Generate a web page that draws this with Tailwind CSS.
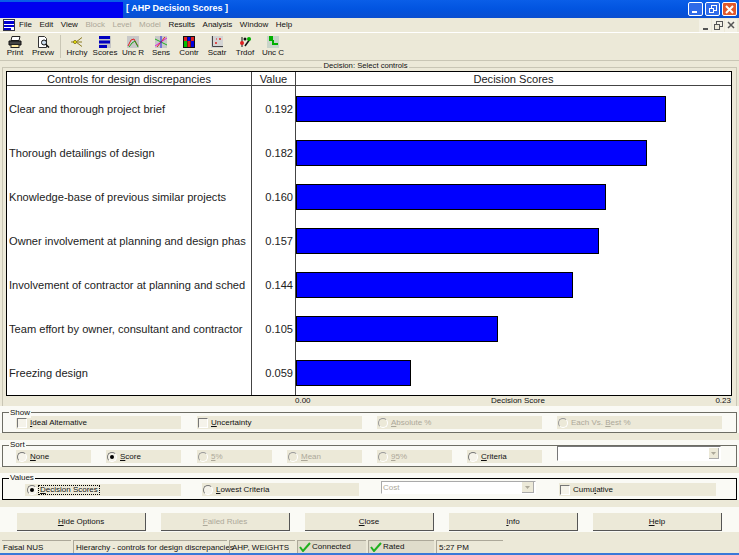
<!DOCTYPE html>
<html lang="en">
<head>
  <meta charset="UTF-8" />
  <title>AHP Decision Scores</title>
  <script src="https://cdn.jsdelivr.net/npm/@tailwindcss/browser@4"></script>
</head>
<body class="w-[739px] h-[555px] overflow-hidden bg-[#ece9d8] font-['Liberation_Sans',sans-serif] text-[8px] text-[#111]">

  <!-- Title bar -->
  <div class="h-[18px] flex items-center bg-gradient-to-b from-[#0a5ee8] via-[#0254e0] to-[#0a4ed0]">
    <div class="w-[123px] h-[16px] self-end bg-[#0000f0]"></div>
    <div class="ml-[3px] text-[9px] font-bold text-white">[ AHP Decision Scores ]</div>
    <div class="ml-auto flex gap-[2px] pr-[2px]">
      <div class="w-[15px] h-[14px] rounded-[2px] border border-white bg-[#2f6ae8] flex items-end pl-[3px] pb-[2px]"><div class="w-[5px] h-[2px] bg-white"></div></div>
      <div class="w-[15px] h-[14px] rounded-[2px] border border-white bg-[#2f6ae8] flex items-center justify-center">
        <svg width="10" height="10" viewBox="0 0 10 10" fill="none" stroke="#fff"><rect x="3.5" y="1.5" width="5" height="5"/><rect x="1.5" y="4.5" width="4" height="4" fill="#2f6ae8"/></svg>
      </div>
      <div class="w-[15px] h-[14px] rounded-[2px] border border-white bg-[#e2582c] flex items-center justify-center">
        <svg width="9" height="9" viewBox="0 0 9 9" stroke="#fff" stroke-width="2"><path d="M1 1 8 8M8 1 1 8"/></svg>
      </div>
    </div>
  </div>

  <!-- Menu -->
  <div class="h-[15px] flex items-center pr-[2px] border-b border-white">
    <svg class="ml-[3px] mr-[4px]" width="12" height="12" viewBox="0 0 12 12"><rect width="12" height="12" fill="#fff"/><rect x="0.5" y="0.5" width="11" height="11" fill="none" stroke="#334"/><rect x="1" y="2" width="10" height="3" fill="#0000d0"/><rect x="1" y="6" width="10" height="2" fill="#0000d0"/><rect x="1" y="9" width="7" height="2" fill="#0000d0"/></svg>
    <div class="flex gap-[7.5px]">
      <span>File</span><span>Edit</span><span>View</span>
      <span class="text-[#aca899]">Block</span><span class="text-[#aca899]">Level</span><span class="text-[#aca899]">Model</span>
      <span>Results</span><span>Analysis</span><span>Window</span><span>Help</span>
    </div>
    <div class="ml-auto flex gap-[1px]">
      <div class="w-[12px] h-[13px] bg-[#f3f1e6] flex items-end justify-center pb-[2px]"><div class="w-[5px] h-[2px] bg-[#555]"></div></div>
      <div class="w-[12px] h-[13px] bg-[#f3f1e6] flex items-center justify-center"><svg width="9" height="9" viewBox="0 0 9 9" fill="none" stroke="#555"><rect x="2.5" y="0.5" width="6" height="5"/><rect x="0.5" y="3.5" width="5" height="5" fill="#ece9d8"/></svg></div>
      <div class="w-[12px] h-[13px] bg-[#f3f1e6] flex items-center justify-center"><svg width="8" height="8" viewBox="0 0 8 8" stroke="#555" stroke-width="1.5"><path d="M1 1 7 7M7 1 1 7"/></svg></div>
    </div>
  </div>

  <!-- Toolbar -->
  <div class="h-[28px] flex items-start pt-[3px] pl-[1px] leading-[10px] border-b border-[#c9c6b5]">
    <div class="w-[28px] flex flex-col items-center">
      <svg width="14" height="12" viewBox="0 0 14 12"><path d="M4 .5h8l-1 4H3z" fill="#fff" stroke="#222"/><path d="M1 5h12v4H1z" fill="#444" stroke="#111"/><rect x="3" y="8.5" width="8" height="3" fill="#ffe9a0" stroke="#222"/></svg>
      <span>Print</span>
    </div>
    <div class="w-[28px] flex flex-col items-center">
      <svg width="14" height="12" viewBox="0 0 14 12"><path d="M2.500 .5h6l2 2v9h-8z" fill="#fff" stroke="#333"/><circle cx="8" cy="6.500" r="2.500" fill="#cde" stroke="#111"/><path d="M10 8.500l3 3" stroke="#111" stroke-width="1.500"/></svg>
      <span>Prevw</span>
    </div>
    <div class="w-px h-[23px] bg-[#c9c6b5] ml-[3px] mr-[2px] -mt-[1px]"></div>
    <div class="w-[28px] flex flex-col items-center">
      <svg width="14" height="12" viewBox="0 0 14 12" fill="none" stroke="#8a7a20"><path d="M1 6h5M6 6 12 1.500M6 6h6M6 6l6 4.500"/><circle cx="5" cy="6" r="1.500" fill="#ff0"/></svg>
      <span>Hrchy</span>
    </div>
    <div class="w-[28px] flex flex-col items-center">
      <svg width="12" height="12" viewBox="0 0 12 12"><rect width="12" height="12" fill="#c4c4c4"/><rect x="0" y="0" width="11" height="3" fill="#0000c0"/><rect x="0" y="4.500" width="11" height="3" fill="#0000c0"/><rect x="0" y="9" width="8" height="3" fill="#0000c0"/></svg>
      <span>Scores</span>
    </div>
    <div class="w-[28px] flex flex-col items-center">
      <svg width="12" height="12" viewBox="0 0 12 12" fill="none"><rect width="12" height="12" fill="#c8c8c8"/><path d="M1 10 4 4 7 3 9 7 11 10" stroke="#e02020"/><path d="M2 11 5 7 8 5 11 11" stroke="#20a020"/></svg>
      <span>Unc R</span>
    </div>
    <div class="w-[28px] flex flex-col items-center">
      <svg width="12" height="12" viewBox="0 0 12 12" fill="none"><rect width="12" height="12" fill="#c8c8c8"/><path d="M0 10 12 2" stroke="#e020e0"/><path d="M0 3 12 9" stroke="#20b020"/><path d="M2 11 10 1" stroke="#e02020"/><path d="M6 0v12" stroke="#2020e0"/></svg>
      <span>Sens</span>
    </div>
    <div class="w-[28px] flex flex-col items-center">
      <svg width="12" height="12" viewBox="0 0 12 12"><rect width="12" height="12" fill="#111"/><rect x="1" y="1" width="3" height="4" fill="#e02020"/><rect x="1" y="5" width="3" height="6" fill="#00c000"/><rect x="4.500" y="1" width="3" height="4" fill="#0000e0"/><rect x="4.500" y="5" width="3" height="6" fill="#e02020"/><rect x="8" y="1" width="3" height="4" fill="#e02020"/><rect x="8" y="5" width="3" height="6" fill="#0000e0"/></svg>
      <span>Contr</span>
    </div>
    <div class="w-[28px] flex flex-col items-center">
      <svg width="12" height="12" viewBox="0 0 12 12" fill="none"><rect width="12" height="12" fill="#d4d4d4"/><path d="M1.500 0v10.500H12" stroke="#444"/><path d="M4 7h2M5 6v2M8 3h2M9 2v2M5 3h1" stroke="#e02020"/></svg>
      <span>Scatr</span>
    </div>
    <div class="w-[28px] flex flex-col items-center">
      <svg width="12" height="12" viewBox="0 0 12 12" fill="none"><path d="M3 1v10" stroke="#111"/><circle cx="3" cy="7" r="2" fill="#e02020"/><path d="M6 10 11 3" stroke="#111" stroke-width="1.500"/><circle cx="10" cy="3" r="2" fill="#00b000"/><circle cx="6" cy="3" r="1.500" fill="#111"/></svg>
      <span>Trdof</span>
    </div>
    <div class="w-[28px] flex flex-col items-center">
      <svg width="12" height="12" viewBox="0 0 12 12"><rect width="12" height="12" fill="#c8d4c8"/><rect x="2" y="0" width="4" height="5" fill="#00b000"/><rect x="5" y="4" width="2" height="5" fill="#00b000"/><rect x="5" y="7" width="6" height="2" fill="#00b000"/></svg>
      <span>Unc C</span>
    </div>
  </div>

  <!-- Chart frame -->
  <div class="mt-[6px] mx-[2px] h-[339px] relative border-t border-x border-[#c9c6b5] pt-[3px]">
    <div class="absolute -top-[7px] left-0 right-[8px] flex justify-center leading-[9px] text-[7.7px]"><span class="bg-[#ece9d8] px-[1px]">Decision: Select controls</span></div>

    <div class="ml-[3px] w-[726px] h-[325px] bg-white border border-black flex flex-col text-[11.1px] text-[#222]">
      <div class="h-[14px] flex border-b border-[#444] leading-[14px] text-center">
        <div class="w-[245px] border-r border-[#444]">Controls for design discrepancies</div>
        <div class="w-[44px] border-r border-[#444]">Value</div>
        <div class="flex-1">Decision Scores</div>
      </div>
      <div class="flex-1 flex">
        <div class="w-[245px] border-r border-[#444] pl-[2px] whitespace-nowrap overflow-hidden flex flex-col justify-around pt-[1px]">
          <div>Clear and thorough project brief</div>
          <div>Thorough detailings of design</div>
          <div>Knowledge-base of previous similar projects</div>
          <div>Owner involvement at planning and design phas</div>
          <div>Involvement of contractor at planning and sched</div>
          <div>Team effort by owner, consultant and contractor</div>
          <div>Freezing design</div>
        </div>
        <div class="w-[44px] border-r border-[#444] text-right pr-[2px] flex flex-col justify-around pt-[1px]">
          <div>0.192</div><div>0.182</div><div>0.160</div><div>0.157</div><div>0.144</div><div>0.105</div><div>0.059</div>
        </div>
        <div class="flex-1 flex flex-col justify-around pt-[1px]">
          <div class="h-[26px] bg-[#0000ff] border border-black w-[370px]"></div>
          <div class="h-[26px] bg-[#0000ff] border border-black w-[351px]"></div>
          <div class="h-[26px] bg-[#0000ff] border border-black w-[310px]"></div>
          <div class="h-[26px] bg-[#0000ff] border border-black w-[303px]"></div>
          <div class="h-[26px] bg-[#0000ff] border border-black w-[277px]"></div>
          <div class="h-[26px] bg-[#0000ff] border border-black w-[202px]"></div>
          <div class="h-[26px] bg-[#0000ff] border border-black w-[115px]"></div>
        </div>
      </div>
    </div>

    <!-- Axis -->
    <div class="h-[10px] flex items-center pl-[292px] pr-[5px] justify-between leading-[10px]">
      <span>0.00</span><span class="ml-[10px]">Decision Score</span><span>0.23</span>
    </div>
  </div>

  <!-- Show -->
  <div class="h-[27px] pt-[6px] px-[2px] bg-[#fafaf5]">
    <div class="h-[21px] relative border border-[#6d6d64] pt-[3px] flex">
      <span class="absolute -top-[5px] left-[6px] bg-[#fafaf5] px-[1px] leading-[10px]">Show</span>
      <div class="ml-[13px] w-[165px] h-[13px] bg-[#ece9d8] flex items-center pl-[1px]"><div class="w-[10px] h-[10px] bg-[#f5f3ea] border border-[#777] border-b-white border-r-white mr-[3px]"></div><span><u>I</u>deal Alternative</span></div>
      <div class="ml-[16px] w-[165px] h-[13px] bg-[#ece9d8] flex items-center pl-[1px]"><div class="w-[10px] h-[10px] bg-[#f5f3ea] border border-[#777] border-b-white border-r-white mr-[3px]"></div><span><u>U</u>ncertainty</span></div>
      <div class="ml-[15px] w-[165px] h-[13px] bg-[#ece9d8] flex items-center pl-[1px] text-[#aca899]"><div class="w-[10px] h-[10px] rounded-full bg-[#ece9d8] border border-[#999] border-b-white border-r-white mr-[3px]"></div><span><u>A</u>bsolute %</span></div>
      <div class="ml-[15px] w-[165px] h-[13px] bg-[#ece9d8] flex items-center pl-[1px] text-[#aca899]"><div class="w-[10px] h-[10px] rounded-full bg-[#ece9d8] border border-[#999] border-b-white border-r-white mr-[3px]"></div><span>Each Vs. <u>B</u>est %</span></div>
    </div>
  </div>

  <!-- Sort -->
  <div class="mt-[7px] h-[27px] pt-[5px] px-[2px] bg-[#fafaf5]">
    <div class="h-[22px] relative border border-[#6d6d64] pt-[4px] flex">
      <span class="absolute -top-[6px] left-[6px] bg-[#fafaf5] px-[1px] leading-[10px]">Sort</span>
      <div class="ml-[13px] w-[75px] h-[13px] bg-[#ece9d8] flex items-center pl-[1px]"><div class="w-[10px] h-[10px] rounded-full bg-[#f5f3ea] border border-[#777] border-b-white border-r-white mr-[3px]"></div><span><u>N</u>one</span></div>
      <div class="ml-[15px] w-[75px] h-[13px] bg-[#ece9d8] flex items-center pl-[1px]"><div class="w-[10px] h-[10px] rounded-full bg-[#f5f3ea] border border-[#777] border-b-white border-r-white mr-[3px] flex items-center justify-center"><div class="w-[4px] h-[4px] rounded-full bg-black"></div></div><span><u>S</u>core</span></div>
      <div class="ml-[16px] w-[75px] h-[13px] bg-[#ece9d8] flex items-center pl-[1px] text-[#aca899]"><div class="w-[10px] h-[10px] rounded-full bg-[#ece9d8] border border-[#999] border-b-white border-r-white mr-[3px]"></div><span><u>5</u>%</span></div>
      <div class="ml-[15px] w-[75px] h-[13px] bg-[#ece9d8] flex items-center pl-[1px] text-[#aca899]"><div class="w-[10px] h-[10px] rounded-full bg-[#ece9d8] border border-[#999] border-b-white border-r-white mr-[3px]"></div><span><u>M</u>ean</span></div>
      <div class="ml-[15px] w-[75px] h-[13px] bg-[#ece9d8] flex items-center pl-[1px] text-[#aca899]"><div class="w-[10px] h-[10px] rounded-full bg-[#ece9d8] border border-[#999] border-b-white border-r-white mr-[3px]"></div><span><u>9</u>5%</span></div>
      <div class="ml-[15px] w-[75px] h-[13px] bg-[#ece9d8] flex items-center pl-[1px]"><div class="w-[10px] h-[10px] rounded-full bg-[#f5f3ea] border border-[#777] border-b-white border-r-white mr-[3px]"></div><span><u>C</u>riteria</span></div>
      <div class="ml-[15px] w-[164px] h-[15px] -mt-[4px] bg-white border border-[#777] border-b-white border-r-white flex justify-end items-center pr-[1px]">
        <div class="w-[10px] h-[11px] bg-[#ece9d8] border-r border-b border-[#aaa] flex items-center justify-center"><svg width="5" height="3" viewBox="0 0 5 3"><path d="M0 0h5L2.500 3z" fill="#aca899"/></svg></div>
      </div>
    </div>
  </div>

  <!-- Values -->
  <div class="mt-[6px] h-[27px] pt-[5px] px-[2px] bg-[#fafaf5]">
    <div class="h-[22px] relative border border-black pt-[4px] flex">
      <span class="absolute -top-[6px] left-[6px] bg-[#fafaf5] px-[1px] leading-[10px]">Values</span>
      <div class="ml-[22px] w-[156px] h-[12px] mt-[1px] bg-[#ece9d8] flex items-center pl-[2px]"><div class="w-[10px] h-[10px] rounded-full bg-[#f5f3ea] border border-[#777] border-b-white border-r-white mr-[1px] flex items-center justify-center"><div class="w-[4px] h-[4px] rounded-full bg-black"></div></div><span class="border border-dotted border-black leading-[8px] px-[1px]"><u>D</u>ecision Scores</span></div>
      <div class="ml-[21px] w-[157px] h-[13px] bg-[#ece9d8] flex items-center pl-[1px]"><div class="w-[10px] h-[10px] rounded-full bg-[#f5f3ea] border border-[#777] border-b-white border-r-white mr-[3px]"></div><span><u>L</u>owest Criteria</span></div>
      <div class="ml-[22px] w-[155px] h-[13px] -mt-[2px] bg-white border border-[#aaa] border-b-white border-r-white flex justify-between items-center pl-[1px] pr-[1px] text-[#aca899]">
        <span>Cost</span>
        <div class="w-[12px] h-[11px] bg-[#ece9d8] border-r border-b border-[#aaa] flex items-center justify-center"><svg width="5" height="3" viewBox="0 0 5 3"><path d="M0 0h5L2.500 3z" fill="#aca899"/></svg></div>
      </div>
      <div class="ml-[23px] w-[157px] h-[13px] bg-[#ece9d8] flex items-center pl-[1px]"><div class="w-[10px] h-[10px] bg-[#f5f3ea] border border-[#777] border-b-white border-r-white mr-[3px]"></div><span>Cumu<u>l</u>ative</span></div>
    </div>
  </div>

  <!-- Buttons -->
  <div class="mt-[7px] h-[25px] bg-[#fafaf5] flex items-start pt-[6px] pl-[17px] gap-[15px]">
    <div class="w-[129px] h-[18px] bg-[#ece9d8] border-r border-b border-[#555] flex items-center justify-center"><span><u>H</u>ide Options</span></div>
    <div class="w-[129px] h-[18px] bg-[#ece9d8] border-r border-b border-[#555] flex items-center justify-center text-[#aca899]"><span><u>F</u>ailed Rules</span></div>
    <div class="w-[129px] h-[18px] bg-[#ece9d8] border-r border-b border-[#555] flex items-center justify-center"><span><u>C</u>lose</span></div>
    <div class="w-[129px] h-[18px] bg-[#ece9d8] border-r border-b border-[#555] flex items-center justify-center"><span><u>I</u>nfo</span></div>
    <div class="w-[129px] h-[18px] bg-[#ece9d8] border-r border-b border-[#555] flex items-center justify-center"><span><u>H</u>elp</span></div>
  </div>

  <!-- Status bar -->
  <div class="mt-[8px] h-[13px] flex gap-[2px] leading-[14px] px-[2px] whitespace-nowrap">
    <div class="w-[69px] border-t border-[#aca899] pl-[1px]">Faisal NUS</div>
    <div class="w-[154px] border-t border-l border-[#aca899] pl-[2px]">Hierarchy - controls for design discrepancies</div>
    <div class="w-[66px] border-t border-l border-[#aca899] pl-[2px]">AHP, WEIGHTS</div>
    <div class="w-[69px] border-t border-l border-[#aca899] bg-[#dfdccb] flex items-center"><svg class="ml-[1px] mr-[1px]" width="12" height="10" viewBox="0 0 12 10" fill="none" stroke="#20b020" stroke-width="2"><path d="M1 5l3 4 7-8"/></svg>Connected</div>
    <div class="w-[66px] border-t border-l border-[#aca899] bg-[#dfdccb] flex items-center"><svg class="ml-[1px] mr-[1px]" width="12" height="10" viewBox="0 0 12 10" fill="none" stroke="#20b020" stroke-width="2"><path d="M1 5l3 4 7-8"/></svg>Rated</div>
    <div class="w-[67px] border-t border-l border-[#aca899] pl-[2px]">5:27 PM</div>
  </div>
  <div class="h-[2px] bg-[#3a78d8]"></div>

</body>
</html>
